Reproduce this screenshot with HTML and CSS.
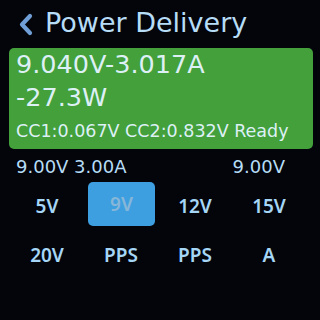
FILE: index.html
```html
<!DOCTYPE html>
<html>
<head>
<meta charset="utf-8">
<link rel="stylesheet" href="styles.css">
</head>
<body>
<div class="screen">
  <div class="header">
    <svg class="back" width="18" height="24" viewBox="0 0 18 24">
      <polyline points="13,4 5,12.5 13,21" fill="none" stroke="#6f9fd6" stroke-width="4.2" stroke-linecap="round" stroke-linejoin="round"/>
    </svg>
    <span class="title">Power Delivery</span>
  </div>
  <div class="panel">
    <div class="big">9.040V-3.017A</div>
    <div class="big">-27.3W</div>
    <div class="small">CC1:0.067V CC2:0.832V Ready</div>
  </div>
  <div class="status">
    <span>9.00V 3.00A</span>
    <span>9.00V</span>
  </div>
  <div class="grid">
    <div class="cell">5V</div>
    <div class="cell active">9V</div>
    <div class="cell">12V</div>
    <div class="cell">15V</div>
    <div class="cell">20V</div>
    <div class="cell">PPS</div>
    <div class="cell">PPS</div>
    <div class="cell">A</div>
  </div>
</div>
</body>
</html>
```
FILE: styles.css
```css
html, body {
  margin: 0;
  padding: 0;
  background: #03050b;
}
.screen {
  width: 320px;
  height: 320px;
  overflow: hidden;
  font-family: "DejaVu Sans", "Noto Sans", sans-serif;
  background: #03050b;
}
.header {
  display: flex;
  align-items: center;
  height: 46px;
  padding-left: 17px;
  gap: 10px;
}
.back {
  margin-top: 2px;
}
.title {
  color: #b6dcf6;
  font-size: 27px;
  line-height: 30px;
}
.panel {
  margin: 2px 7px 0 9px;
  height: 101px;
  background: #43a03b;
  border-radius: 5px;
  padding: 0 0 0 7px;
  box-sizing: border-box;
  color: #ddf0f6;
}
.big {
  font-size: 25.5px;
  line-height: 33px;
}
.small {
  font-size: 17.5px;
  line-height: 22px;
  margin-top: 6px;
}
.status {
  display: flex;
  justify-content: space-between;
  padding: 7px 35px 0 16px;
  color: #b6dcf6;
  font-size: 18px;
  line-height: 22px;
}
.grid {
  display: grid;
  grid-template-columns: repeat(4, 74px);
  grid-auto-rows: 49px;
  padding-left: 10px;
  margin-top: 3px;
}
.cell {
  display: flex;
  align-items: center;
  justify-content: center;
  color: #a6d6f6;
  font-family: "Noto Sans", sans-serif;
  font-size: 19px;
  font-weight: 600;
}
.active {
  margin: 1px 3px 4px 4px;
  background: #3d9fe0;
  border-radius: 5px;
  color: #86b6d8;
}
```
